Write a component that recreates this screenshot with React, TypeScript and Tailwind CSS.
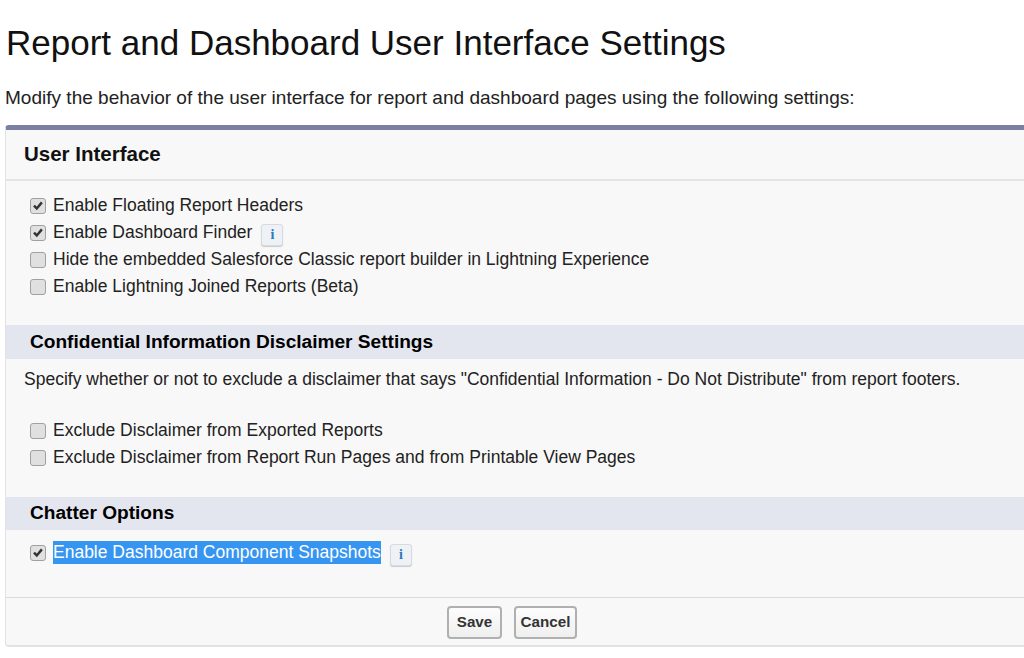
const font = "font-['Liberation_Sans',Arial,sans-serif]";

function Check({ checked }: { checked?: boolean }) {
  return (
    <span className="w-4 h-4 shrink-0 rounded-[3px] border border-[#a0a0a0] bg-[#e0e0e0] flex items-center justify-center">
      {checked && (
        <svg viewBox="0 0 16 16" className="w-[15px] h-[15px]">
          <path d="M3.4 8.2 L6.6 11.4 L12.4 4.4" fill="none" stroke="#333" strokeWidth="2.8" />
        </svg>
      )}
    </span>
  );
}

function Info() {
  return (
    <span className="w-[22px] h-[22px] shrink-0 rounded-[3px] border border-[#d6dbe0] bg-[#eef2f6] shadow-[0_1px_1px_rgba(0,0,0,0.18)] flex items-center justify-center font-['Liberation_Serif',serif] font-bold text-[14px] leading-none text-[#2f7ab8]">
      i
    </span>
  );
}

function Row({ label, checked, info, selected }: { label: string; checked?: boolean; info?: boolean; selected?: boolean }) {
  return (
    <div className="flex items-center h-[27px]">
      <Check checked={checked} />
      <span className={`ml-[7px] text-[17.5px] leading-[23px] whitespace-nowrap ${selected ? "bg-[#3695f0] text-white" : "text-[#222]"}`}>{label}</span>
      {info && <span className="ml-[9px] mt-[5px]"><Info /></span>}
    </div>
  );
}

function SectionBar({ children, h }: { children: string; h: string }) {
  return (
    <div className={`${h} shrink-0 bg-[#e3e6ee] pl-6 flex items-center text-[19.1px] font-bold text-black`}>{children}</div>
  );
}

export default function App() {
  return (
    <div className={`${font} w-[1024px] h-[658px] overflow-hidden bg-white text-black`}>
      <h1 className="pl-[6px] pt-[22px] text-[35px] leading-[42px] text-[#111] whitespace-nowrap">Report and Dashboard User Interface Settings</h1>
      <p className="pl-[5px] mt-[22px] text-[19.05px] leading-[24px] text-[#222] whitespace-nowrap">Modify the behavior of the user interface for report and dashboard pages using the following settings:</p>
      <div className="ml-[5px] mt-[15px] h-[522px] w-[1030px] bg-[#f8f8f8] rounded-[4px] border-t-[5px] border-t-[#7a7fa3] border-l border-l-[#e2e2e2] border-b-2 border-b-[#e2e2e2] flex flex-col">
        <div className="h-[51px] shrink-0 pl-[18px] flex items-center text-[20.5px] font-bold text-[#111] border-b-2 border-b-[#e4e4e4]">User Interface</div>
        <div className="pl-[24px] pt-[11px] h-[144px] shrink-0">
          <Row label="Enable Floating Report Headers" checked />
          <Row label="Enable Dashboard Finder" checked info />
          <Row label="Hide the embedded Salesforce Classic report builder in Lightning Experience" />
          <Row label="Enable Lightning Joined Reports (Beta)" />
        </div>
        <SectionBar h="h-[34px]">Confidential Information Disclaimer Settings</SectionBar>
        <div className="h-[138px] shrink-0">
          <p className="pl-[18px] pt-[8px] text-[17.5px] leading-[24px] text-[#222] whitespace-nowrap">Specify whether or not to exclude a disclaimer that says "Confidential Information - Do Not Distribute" from report footers.</p>
          <div className="pl-[24px] mt-[26px]">
            <Row label="Exclude Disclaimer from Exported Reports" />
            <Row label="Exclude Disclaimer from Report Run Pages and from Printable View Pages" />
          </div>
        </div>
        <SectionBar h="h-[33px]">Chatter Options</SectionBar>
        <div className="h-[68px] shrink-0 pl-[24px] pt-[9px] border-b border-b-[#dcdcdc]">
          <Row label="Enable Dashboard Component Snapshots" checked info selected />
        </div>
        <div className="flex-1 flex justify-center items-center gap-[12px] pt-[1px] pr-[17px]">
          <button className="h-[33px] w-[55px] rounded-[4px] border-2 border-[#b0b0b0] bg-gradient-to-b from-[#fdfdfd] to-[#efefef] text-[15.2px] font-bold text-[#333]">Save</button>
          <button className="h-[33px] w-[63px] rounded-[4px] border-2 border-[#b0b0b0] bg-gradient-to-b from-[#fdfdfd] to-[#efefef] text-[15.2px] font-bold text-[#333]">Cancel</button>
        </div>
      </div>
    </div>
  );
}
